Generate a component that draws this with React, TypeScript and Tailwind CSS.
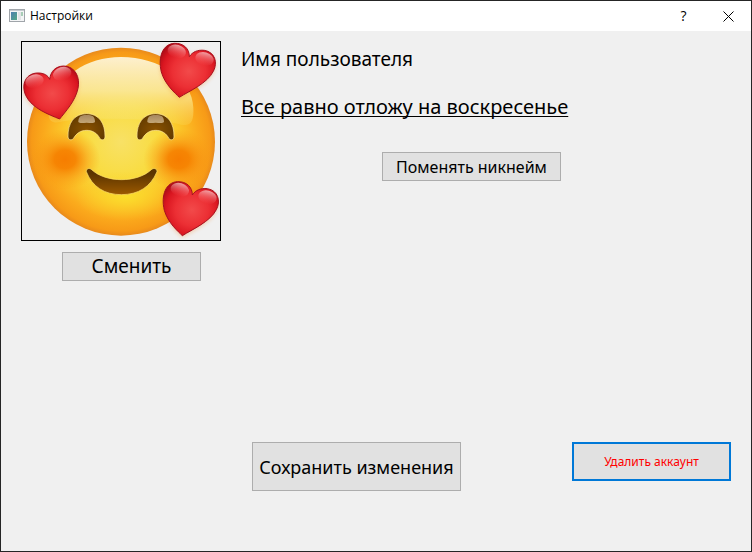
import type { ButtonHTMLAttributes } from "react";

const RIGHT_HEART =
  "M490 184 C478 172 447 146 436 108 C425 62 441 24 475 22 C503 21 520 38 520 62 C530 47 545 41 565 43 C597 48 606 80 592 106 C574 142 520 165 490 184 Z";
const LEFT_HEART =
  "M131 249 C100 236 48 218 29 178 C14 143 31 111 66 111 C84 111 96 118 101 130 C104 106 118 91 143 90 C178 91 193 124 186 157 C178 196 147 228 131 249 Z";
const EYE =
  "M156 303 C155 262 174 233 212 233 C249 233 268 262 267 303 C266 312 258 314 252 308 C244 292 230 283 212 283 C194 283 181 292 172 308 C166 314 157 312 156 303 Z";

function Heart({ d, cx, cy, tilt }: { d: string; cx: number; cy: number; tilt: number }) {
  return (
    <g>
      <path d={d} fill="#f07000" opacity="0.3" filter="url(#soft)" transform="translate(0 5)" />
      <path d={d} fill="url(#heart)" stroke="#a5101f" strokeWidth="3" />
      <g transform={`rotate(${tilt} ${cx} ${cy})`}>
        <ellipse cx={cx - 43} cy={cy - 42} rx="28" ry="20" fill="url(#gloss)" />
        <ellipse cx={cx + 43} cy={cy - 42} rx="28" ry="20" fill="url(#gloss)" />
      </g>
    </g>
  );
}

function Eye() {
  return (
    <g>
      <path d={EYE} fill="url(#brown)" stroke="#ffe795" strokeOpacity="0.7" strokeWidth="3" />
      <path
        d="M187 258 C187 241 196 237 212 237 C229 237 237 241 237 258 C231 264 222 260 212 260 C202 260 193 264 187 258 Z"
        fill="url(#shine)"
      />
    </g>
  );
}

function Avatar() {
  return (
    <svg viewBox="18 18 594 594" className="block h-full w-full" role="img" aria-label="Аватар">
      <defs>
        <radialGradient id="face" gradientUnits="userSpaceOnUse" cx="315" cy="317" r="282">
          <stop offset="0" stopColor="#f8e166" />
          <stop offset="0.4" stopColor="#f9dc40" />
          <stop offset="0.62" stopColor="#fbc82b" />
          <stop offset="0.82" stopColor="#fbaa1c" />
          <stop offset="0.95" stopColor="#f79a17" />
          <stop offset="1" stopColor="#e88a1c" />
        </radialGradient>
        <radialGradient id="chin">
          <stop offset="0" stopColor="#fbe12c" stopOpacity="0.9" />
          <stop offset="1" stopColor="#fbd028" stopOpacity="0" />
        </radialGradient>
        <linearGradient id="forehead" x1="0" y1="0" x2="0" y2="1">
          <stop offset="0" stopColor="#fdf0cf" />
          <stop offset="0.5" stopColor="#fae99b" stopOpacity="0.9" />
          <stop offset="1" stopColor="#f9e36a" stopOpacity="0.2" />
        </linearGradient>
        <radialGradient id="cheek">
          <stop offset="0" stopColor="#f67d00" />
          <stop offset="0.3" stopColor="#f68000" stopOpacity="0.92" />
          <stop offset="0.65" stopColor="#f89010" stopOpacity="0.45" />
          <stop offset="1" stopColor="#fa9f10" stopOpacity="0" />
        </radialGradient>
        <radialGradient id="heart" cx="0.52" cy="0.52" r="0.6">
          <stop offset="0" stopColor="#f24a4a" />
          <stop offset="0.5" stopColor="#ec2f34" />
          <stop offset="0.8" stopColor="#da1620" />
          <stop offset="1" stopColor="#ae0c17" />
        </radialGradient>
        <linearGradient id="gloss" x1="0" y1="0" x2="0" y2="1">
          <stop offset="0" stopColor="#fff" stopOpacity="0.6" />
          <stop offset="1" stopColor="#ff7070" stopOpacity="0" />
        </linearGradient>
        <radialGradient id="brown" cx="0.5" cy="0.6" r="0.6">
          <stop offset="0" stopColor="#8a5200" />
          <stop offset="1" stopColor="#603900" />
        </radialGradient>
        <linearGradient id="shine" x1="0" y1="0" x2="0" y2="1">
          <stop offset="0" stopColor="#a78860" />
          <stop offset="1" stopColor="#c4a777" />
        </linearGradient>
        <linearGradient id="mouth" x1="0" y1="0" x2="0" y2="1">
          <stop offset="0.2" stopColor="#5c3500" />
          <stop offset="1" stopColor="#9c5900" />
        </linearGradient>
        <filter id="soft" x="-20%" y="-20%" width="140%" height="140%">
          <feGaussianBlur stdDeviation="7" />
        </filter>
      </defs>
      <circle cx="315" cy="317" r="282" fill="url(#face)" />
      <ellipse cx="330" cy="480" rx="150" ry="75" fill="url(#chin)" />
      <path
        d="M100 220 C125 120 210 63 315 63 C430 63 530 130 532 215 C534 255 525 272 495 266 C430 246 200 242 130 258 C106 264 92 250 100 220 Z"
        fill="url(#forehead)"
      />
      <ellipse cx="147" cy="370" rx="106" ry="92" fill="url(#cheek)" />
      <ellipse cx="488" cy="370" rx="106" ry="92" fill="url(#cheek)" />
      <Eye />
      <g transform="translate(207 0)">
        <Eye />
      </g>
      <path
        d="M211 407 C211 398 219 394 227 401 C270 441 363 441 406 401 C414 394 423 398 423 407 C404 453 367 476 316 476 C266 476 229 453 211 407 Z"
        fill="url(#mouth)"
        stroke="#ffe36a"
        strokeOpacity="0.7"
        strokeWidth="3"
      />
      <Heart d={LEFT_HEART} cx={108} cy={165} tilt={-15} />
      <Heart d={RIGHT_HEART} cx={513} cy={98} tilt={15} />
      <g transform="translate(9 415)">
        <Heart d={RIGHT_HEART} cx={513} cy={98} tilt={15} />
      </g>
    </svg>
  );
}

function PushButton({ className = "", ...rest }: ButtonHTMLAttributes<HTMLButtonElement>) {
  return (
    <button
      type="button"
      className={`flex items-center justify-center whitespace-nowrap bg-[#e1e1e1] ${className}`}
      {...rest}
    />
  );
}

function TitleBar() {
  return (
    <header className="flex h-[30px] items-center bg-white pl-2 font-['Open_Sans','Noto_Sans',sans-serif] text-xs">
      <svg width="16" height="14" viewBox="0 0 16 14" aria-hidden="true">
        <rect x="0.5" y="0.5" width="15" height="12" fill="#f4f5f6" stroke="#a0a5aa" />
        <rect x="1" y="1" width="14" height="1" fill="#c4c9ce" />
        <rect x="2" y="3" width="6" height="8" fill="url(#pane)" />
        <rect x="9" y="3" width="3" height="8" fill="#e2e4e6" />
        <rect x="12" y="3" width="2" height="4" fill="#a8cdb7" />
        <defs>
          <linearGradient id="pane" x1="0" y1="0" x2="1" y2="1">
            <stop offset="0" stopColor="#4d7fb0" />
            <stop offset="1" stopColor="#54a884" />
          </linearGradient>
        </defs>
      </svg>
      <h1 className="ml-[5px] flex-1">Настройки</h1>
      <button type="button" aria-label="Справка" className="flex h-full w-[45px] items-center justify-center text-sm">
        ?
      </button>
      <button type="button" aria-label="Закрыть" className="flex h-full w-[45px] items-center justify-center">
        <svg width="11" height="11" viewBox="0 0 11 11" stroke="#000" aria-hidden="true">
          <path d="M0.5 0.5 L10.5 10.5 M10.5 0.5 L0.5 10.5" />
        </svg>
      </button>
    </header>
  );
}

export default function App() {
  return (
    <div className="flex min-h-screen flex-col border border-[#252525] bg-[#f0f0f0] font-['Noto_Sans','DejaVu_Sans',sans-serif] text-black">
      <TitleBar />
      <main className="flex flex-1 flex-col justify-between px-5 pt-2.5 pb-[60px]">
        <div className="flex gap-5">
          <section className="flex w-[200px] shrink-0 flex-col gap-[11px]">
            <div className="h-[200px] w-full border border-black">
              <Avatar />
            </div>
            <PushButton className="ml-[41px] h-[29px] w-[139px] border border-[#adadad] text-[19px]">Сменить</PushButton>
          </section>
          <section className="flex flex-1 flex-col pt-1">
            <h2 className="text-[19px] leading-7">Имя пользователя</h2>
            <p className="mt-5 text-xl leading-7 underline decoration-1 underline-offset-2 [text-decoration-skip-ink:none]">
              Все равно отложу на воскресенье
            </p>
            <PushButton className="mt-[31px] ml-[141px] h-[29px] w-[179px] border border-[#adadad] text-base">
              Поменять никнейм
            </PushButton>
          </section>
        </div>
        <footer className="flex items-start justify-between pl-[231px]">
          <PushButton className="h-[49px] w-[209px] border border-[#adadad] text-lg">Сохранить изменения</PushButton>
          <PushButton className="h-[39px] w-[159px] border-2 border-[#0078d7] text-xs text-[#ff0000]">
            Удалить аккаунт
          </PushButton>
        </footer>
      </main>
    </div>
  );
}
